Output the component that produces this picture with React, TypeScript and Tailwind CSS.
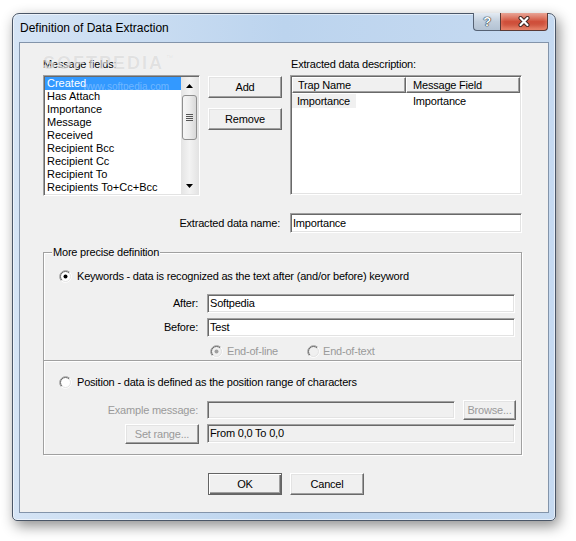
import React from "react";

const raised =
  "flex items-center justify-center border border-t-white border-l-white border-r-[#696969] border-b-[#696969] bg-[#f0f0f0] shadow-[inset_-1px_-1px_0_#a0a0a0,inset_1px_1px_0_#e3e3e3]";
const sunken =
  "border border-t-[#a0a0a0] border-l-[#a0a0a0] border-r-white border-b-white shadow-[inset_1px_1px_0_#696969,inset_-1px_-1px_0_#e3e3e3]";

const fields = [
  "Created",
  "Has Attach",
  "Importance",
  "Message",
  "Received",
  "Recipient Bcc",
  "Recipient Cc",
  "Recipient To",
  "Recipients To+Cc+Bcc",
];

function Radio({ checked = false, disabled = false }: { checked?: boolean; disabled?: boolean }) {
  const fill = disabled ? "#f0f0f0" : "#ffffff";
  const dot = disabled ? "#a0a0a0" : "#000000";
  return (
    <svg width="13" height="13" viewBox="0 0 13 13" className="shrink-0">
      <circle cx="6.5" cy="6.5" r="5.5" fill={fill} />
      <path d="M2.26 10.74A6 6 0 0 1 10.74 2.26" stroke="#a0a0a0" fill="none" />
      <path d="M10.74 2.26A6 6 0 0 1 2.26 10.74" stroke="#ffffff" fill="none" />
      <path d="M2.96 10.04A5 5 0 0 1 10.04 2.96" stroke="#696969" fill="none" />
      <path d="M10.04 2.96A5 5 0 0 1 2.96 10.04" stroke="#e3e3e3" fill="none" />
      {checked && <circle cx="6.5" cy="6.5" r="2" fill={dot} />}
    </svg>
  );
}

function ScrollBar() {
  return (
    <div className="flex w-[17px] flex-col bg-gradient-to-r from-[#e4e4e4] via-[#f3f3f3] to-[#e4e4e4]">
      <div className="flex h-[17px] items-center justify-center">
        <svg width="7" height="4" viewBox="0 0 7 4">
          <path d="M3.5 0L7 4H0z" fill="#000" />
        </svg>
      </div>
      <div className="mx-[1px] mt-[1px] flex h-[45px] flex-col items-center justify-center gap-[1px] rounded-[3px] border border-[#8f8f8f] bg-gradient-to-r from-[#f6f6f6] via-[#ececec] to-[#d8d8d8]">
        <div className="h-[1px] w-[7px] bg-[#555]" />
        <div className="h-[1px] w-[7px] bg-[#555]" />
        <div className="h-[1px] w-[7px] bg-[#555]" />
        <div className="h-[1px] w-[7px] bg-[#555]" />
      </div>
      <div className="flex-1" />
      <div className="flex h-[17px] items-center justify-center">
        <svg width="7" height="4" viewBox="0 0 7 4">
          <path d="M0 0H7L3.5 4z" fill="#000" />
        </svg>
      </div>
    </div>
  );
}

export default function App() {
  return (
    <div className="h-[541px] w-[576px] overflow-hidden bg-white pl-[12px] pt-[13px] font-['Liberation_Sans',Arial,sans-serif] text-[11px] tracking-[-0.2px] text-black">
      <div className="relative flex h-[508px] w-[544px] flex-col rounded-t-[7px] rounded-b-[5px] border border-[#4a5667] bg-gradient-to-r from-[#d5e4f5] via-[#bcd4ee] to-[#c6daf1] px-[6px] pb-[7px] shadow-[3px_5px_14px_rgba(0,0,0,0.45),inset_0_0_0_1px_rgba(255,255,255,0.55)]">
        {/* title bar */}
        <div className="flex h-[28px] items-start">
          <span className="ml-[1px] mt-[7px] text-[12px] leading-[15px] tracking-normal">
            Definition of Data Extraction
          </span>
          <div className="-mt-[1px] ml-auto mr-[1px] flex">
            <div className="flex h-[18px] w-[27px] items-center justify-center rounded-bl-[4px] border border-r-0 border-t-0 border-[#566274] bg-gradient-to-b from-[#e4ebf3] via-[#c2cfdd] to-[#b3c2d3]">
              <span className="text-[13px] font-bold leading-none text-white [text-shadow:0_0_1px_#1e2a38,0_0_1px_#1e2a38,0_0_1px_#1e2a38]">
                ?
              </span>
            </div>
            <div className="flex h-[18px] w-[48px] items-center justify-center rounded-br-[4px] border border-t-0 border-[#5a3a36] bg-gradient-to-b from-[#e8a597] via-[#d04f3a] to-[#c8503c] shadow-[inset_0_-3px_4px_rgba(255,170,140,0.6)]">
              <svg width="14" height="11" viewBox="0 0 14 11">
                <path d="M3.5 2L10.5 9M10.5 2L3.5 9" stroke="#3b2420" strokeWidth="4" strokeLinecap="round" />
                <path d="M3.5 2L10.5 9M10.5 2L3.5 9" stroke="#ffffff" strokeWidth="2.2" strokeLinecap="round" />
              </svg>
            </div>
          </div>
        </div>

        {/* client area */}
        <div className="relative flex flex-1 flex-col border border-[#8394aa] bg-[#f0f0f0] pl-[23px] pr-[26px] pt-[15px]">
          <div className="flex items-start">
            <div className="w-[157px]">
              <div className="h-[13px] leading-[13px]">Message fields:</div>
              <div className={`mt-[4px] flex h-[121px] bg-white p-[1px] ${sunken}`}>
                <div className="flex-1">
                  {fields.map((f, i) => (
                    <div
                      key={f}
                      className={`h-[13px] pl-[2px] leading-[13px] tracking-normal ${
                        i === 0 ? "bg-[#3399ff] text-white" : ""
                      }`}
                    >
                      {f}
                    </div>
                  ))}
                </div>
                <ScrollBar />
              </div>
            </div>

            <div className="ml-[8px] mt-[18px] flex flex-col gap-[10px]">
              <div className={`h-[22px] w-[74px] ${raised}`}>Add</div>
              <div className={`h-[22px] w-[74px] ${raised}`}>Remove</div>
            </div>

            <div className="ml-[8px] w-[232px]">
              <div className="h-[13px] pl-[1px] leading-[13px]">Extracted data description:</div>
              <div className={`mt-[4px] h-[120px] bg-white p-[1px] ${sunken}`}>
                <div className="flex h-[16px]">
                  <div className="w-[114px] border border-b-[#696969] border-l-white border-r-[#696969] border-t-white bg-[#f0f0f0] pl-[5px] leading-[14px] shadow-[inset_-1px_-1px_0_#a0a0a0]">
                    Trap Name
                  </div>
                  <div className="flex-1 border border-b-[#696969] border-l-white border-r-[#696969] border-t-white bg-[#f0f0f0] pl-[6px] leading-[14px] shadow-[inset_-1px_-1px_0_#a0a0a0]">
                    Message Field
                  </div>
                </div>
                <div className="mt-[1px] flex h-[14px] items-center">
                  <div className="w-[114px]">
                    <span className="inline-block bg-[#f0f0f0] pl-[5px] pr-[6px] leading-[14px]">Importance</span>
                  </div>
                  <div className="pl-[7px] leading-[14px]">Importance</div>
                </div>
              </div>
            </div>
          </div>

          <div className="mt-[17px] flex items-center justify-end">
            <span>Extracted data name:</span>
            <div className={`ml-[10px] h-[20px] w-[232px] bg-white pl-[2px] leading-[18px] ${sunken}`}>
              Importance
            </div>
          </div>

          {/* group box */}
          <div className="relative mt-[19px] h-[203px] border border-[#a0a0a0] shadow-[inset_1px_1px_0_#fff,1px_1px_0_#fff]">
            <span className="absolute -top-[7px] left-[8px] bg-[#f0f0f0] px-[1px] leading-[13px]">
              More precise definition
            </span>

            <div className="mt-[17px] flex h-[13px] items-center pl-[15px]">
              <Radio checked />
              <span className="ml-[5px] leading-[13px]">
                Keywords - data is recognized as the text after (and/or before) keyword
              </span>
            </div>

            <div className="mt-[11px] flex h-[19px] items-center pl-[56px]">
              <span className="w-[98px] text-right">After:</span>
              <div className={`ml-[9px] h-[19px] w-[308px] bg-white pl-[2px] leading-[17px] ${sunken}`}>
                Softpedia
              </div>
            </div>
            <div className="mt-[5px] flex h-[19px] items-center pl-[56px]">
              <span className="w-[98px] text-right">Before:</span>
              <div className={`ml-[9px] h-[19px] w-[308px] bg-white pl-[2px] leading-[17px] ${sunken}`}>
                Test
              </div>
            </div>

            <div className="mt-[8px] flex h-[13px] items-center pl-[166px] text-[#9a9a9a]">
              <div className="flex w-[97px] items-center">
                <Radio checked disabled />
                <span className="ml-[4px]">End-of-line</span>
              </div>
              <Radio disabled />
              <span className="ml-[3px]">End-of-text</span>
            </div>

            <div className="mt-[2px] h-[2px] border-b border-t border-b-white border-t-[#a0a0a0]" />

            <div className="mt-[14px] flex h-[13px] items-center pl-[15px]">
              <Radio />
              <span className="ml-[5px] leading-[13px]">
                Position - data is defined as the position range of characters
              </span>
            </div>

            <div className="mt-[11px] flex h-[20px] items-center pl-[56px]">
              <span className="w-[98px] text-right text-[#9a9a9a]">Example message:</span>
              <div className={`ml-[9px] h-[18px] w-[248px] bg-[#f0f0f0] ${sunken}`} />
              <div className={`ml-[8px] h-[20px] w-[53px] text-[#9a9a9a] ${raised}`}>Browse...</div>
            </div>

            <div className="mt-[4px] flex h-[20px] items-start pl-[81px]">
              <div className={`h-[20px] w-[74px] text-[#9a9a9a] ${raised}`}>Set range...</div>
              <div className={`ml-[8px] h-[19px] w-[308px] bg-[#f0f0f0] pl-[2px] leading-[17px] ${sunken}`}>
                From 0,0 To 0,0
              </div>
            </div>
          </div>

          <div className="ml-[165px] mt-[18px] flex">
            <div className="flex h-[22px] w-[74px] items-center justify-center border border-[#646464] bg-[#f0f0f0] shadow-[inset_1px_1px_0_#fff,inset_-1px_-1px_0_#696969,inset_-2px_-2px_0_#a0a0a0]">
              OK
            </div>
            <div className={`ml-[8px] h-[22px] w-[74px] ${raised}`}>Cancel</div>
          </div>

          {/* watermark */}
          <div className="pointer-events-none absolute left-[23px] top-[11px] flex items-start text-[#dcdcdc] [text-shadow:0_0_1px_#fff,0_0_1px_#fff]">
            <span className="text-[18px] font-bold leading-[18px] tracking-[2px] opacity-70">SOFTPEDIA</span>
            <span className="ml-[2px] text-[7px] leading-[8px] opacity-70">™</span>
          </div>
          <span className="pointer-events-none absolute left-[63px] top-[39px] text-[10px] leading-[10px] tracking-normal text-white/30">
            www.softpedia.com
          </span>
        </div>
      </div>
    </div>
  );
}
